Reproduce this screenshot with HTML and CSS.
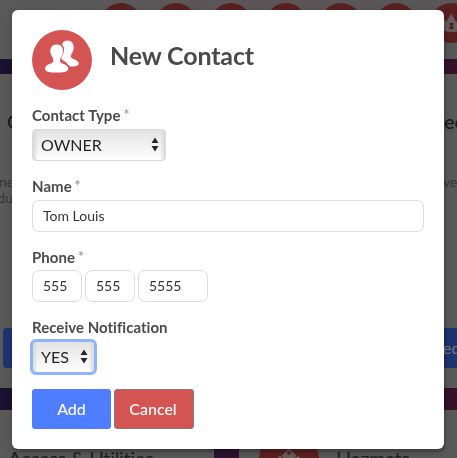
FILE: index.html
```html
<!DOCTYPE html>
<html lang="en">
<head>
<meta charset="utf-8">
<title>New Contact</title>
<link rel="stylesheet" href="styles.css">
</head>
<body>
<div class="page">
  <header class="topbar">
    <i class="dot"></i><i class="dot"></i><i class="dot"></i><i class="dot"></i><i class="dot"></i><i class="dot"></i>
    <i class="dot"><svg viewBox="0 0 40 40"><path fill="#65605f" d="M14 28C11 25 11 20 13.500 16l2 4c0-4 3-5 5-10 1 4 4 6 4.500 10l2-4c3 5 2.500 9-.5 12-3 1.500-9 1.500-12.500 0z"/><path fill="#521818" d="M18.500 20h4v2h-1v2h1v2h-4v-2h1v-2h-1z"/></svg></i>
  </header>
  <section class="panel wide">
    <div class="side left">
      <h3>C</h3>
      <p>one<br>du</p>
      <span class="action"></span>
    </div>
    <div class="side right">
      <h3>ec</h3>
      <p>ve</p>
      <span class="action">ed</span>
    </div>
  </section>
  <section class="lower">
    <div class="panel tile first"><h2>Access &amp; Utilities</h2></div>
    <div class="panel tile second">
      <svg class="haz" viewBox="0 0 60 60"><circle cx="30" cy="30" r="30" fill="#5d2020"/><g fill="#65605f" stroke="#5d2020"><path d="M30 18l8.500 8.500-8.500 8.500-8.500-8.500z"/><path d="M21 25l9 9-9 9-9-9zM39 25l9 9-9 9-9-9z"/></g><circle cx="30" cy="23" r="2" fill="#5d2020"/></svg>
      <h2>Hazmats</h2>
    </div>
  </section>
</div>

<div class="overlay">
  <form class="modal">
    <div class="head">
      <svg class="badge" viewBox="0 0 60 60"><circle cx="30" cy="30" r="30" fill="#d45454"/>
        <path fill="#fff" d="M30 14.500C31 11.500 33 10.500 35.500 10.500C39.500 10.500 41.700 13.400 41.700 17.500C41.700 20.500 40.400 22.500 39.400 24.300C38.400 26.500 38.800 28 40.800 28.800C44 30 46.700 31.200 46.700 33.500C46.700 35.700 43.300 36.500 39.700 36.500C36.800 36.500 36.500 34.300 33.800 32.200C31.700 30.500 29.400 30.200 29.300 28.300C29.300 26.800 32 24 32 19.500C32 17.500 31.300 15.700 30 14.500Z"/>
        <path fill="#fff" d="M24.700 14.500C28.700 14.500 31 17.200 31 21C31 24 29.500 26.300 28.500 28.200C27.500 30.500 27.800 32.300 30 33.300C33.200 34.700 36.200 35.800 36.200 39C36.200 42 30.500 42.500 24.600 42.500C18.700 42.500 13 42 13 39C13 35.800 16.100 34.700 19.300 33.300C21.500 32.300 21.900 30.500 20.900 28.200C19.900 26.300 18.300 24 18.300 21C18.300 17.200 20.700 14.500 24.700 14.500Z"/></svg>
      <h1>New Contact</h1>
    </div>
    <div class="field">
      <label>Contact Type <sup>*</sup></label>
      <div class="select type">OWNER<svg viewBox="0 0 8 15"><path d="M4 .5L7.500 6H.5zM4 14.500L.5 9h7z"/></svg></div>
    </div>
    <div class="field">
      <label>Name <sup>*</sup></label>
      <div class="input">Tom Louis</div>
    </div>
    <div class="field">
      <label>Phone <sup>*</sup></label>
      <div class="phone"><div class="input">555</div><div class="input">555</div><div class="input last">5555</div></div>
    </div>
    <div class="field">
      <label>Receive Notification</label>
      <div class="select notify">YES<svg viewBox="0 0 8 15"><path d="M4 .5L7.500 6H.5zM4 14.500L.5 9h7z"/></svg></div>
    </div>
    <div class="buttons"><button type="button" class="add">Add</button><button type="button" class="cancel">Cancel</button></div>
  </form>
</div>
</body>
</html>
```
FILE: styles.css
```css
* { box-sizing: border-box; }
html, body { margin: 0; height: 100%; overflow: hidden; }
body { font-family: Lato, "Liberation Sans", sans-serif; background: #1c1230; color: #4a4a4a; }
h1, h2, h3, p { margin: 0; }

.page { height: 458px; overflow: hidden; background: linear-gradient(90deg, #19122f, #2b1230 50%, #35122a); }
.topbar { height: 59px; padding: 3px 0 0 100.500px; display: flex; gap: 15px; background: linear-gradient(90deg, #595959 18%, #5c5558 60%, #595757); }
.dot { flex: none; width: 40px; height: 40px; border-radius: 50%; background: #5a2020; }
.dot svg { display: block; width: 40px; height: 40px; }
.panel { background: #595959; }
.wide { height: 314px; margin-top: 15px; display: flex; justify-content: space-between; }
.side { padding-top: 34px; }
.left { width: 40px; }
.right { width: 14px; }
.side h3 { font-size: 20px; line-height: 26px; font-weight: 500; color: #191919; white-space: nowrap; }
.left h3 { padding-left: 7px; }
.right h3 { padding-left: 1px; }
.side p { margin-top: 40px; height: 32px; font-size: 14px; line-height: 16px; color: #363636; }
.left p { margin-left: -9px; width: 22px; text-align: right; }
.action { display: block; height: 40px; margin-top: 122px; background: #1f3370; color: #777; font-size: 16px; line-height: 40px; }
.left .action { margin-left: 3px; border-radius: 3px 0 0 3px; }
.lower { display: flex; justify-content: space-between; height: 48px; margin-top: 22px; }
.tile { overflow: hidden; height: 48px; display: flex; }
.first { width: 214px; padding-left: 8px; }
.second { width: 218px; padding: 20px 0 0 20px; }
.tile h2 { font-size: 20px; line-height: 28px; font-weight: 400; letter-spacing: -.35px; color: #202020; white-space: nowrap; }
.first h2 { margin-top: 34px; }
.second h2 { margin: 14px 0 0 17px; }
.haz { flex: none; width: 60px; height: 60px; }

.overlay { position: fixed; inset: 0; padding: 10px 13px 0 12px; }
.modal { height: 438.500px; padding: 20px; background: #fff; border-radius: 6px; box-shadow: 1px 3px 3px rgba(0,0,0,.22), 1px 3px 10px 0 rgba(0,0,0,.18); }
.head { display: flex; height: 60px; margin-bottom: 15.400px; }
.badge { width: 60px; height: 60px; }
h1 { margin-left: 18px; font-size: 25px; line-height: 51px; font-weight: 700; letter-spacing: -.15px; white-space: nowrap; }
.field { margin-bottom: 15px; }
label { display: block; height: 23.600px; font-size: 15px; line-height: 21px; font-weight: 700; letter-spacing: .03px; white-space: nowrap; }
sup { font-size: 15px; line-height: 0; font-weight: 400; color: #888; vertical-align: 1px; margin-left: -1px; }
.input { height: 32px; padding: 0 10px; border: 1px solid #dcdcdc; border-radius: 7px; font-size: 14px; line-height: 30px; color: #333; }
.phone { display: flex; gap: 3px; }
.phone .input { width: 50px; }
.phone .last { width: 70px; }
.select { display: flex; justify-content: space-between; align-items: center; height: 32px; padding: 0 6px 0 8px; border: 1px solid #dadada; border-radius: 4px; background: linear-gradient(90deg, #d8d8d8, transparent 5px, transparent calc(100% - 5px), #d8d8d8), linear-gradient(#e3e3e3, #f1f1f1 50%, #fdfdfd); font-size: 16px; color: #252525; }
.select svg { width: 8px; height: 15px; fill: #252525; }
.type { width: 134px; }
.notify { width: 63px; outline: 3px solid #8eb5fa; outline-offset: -1px; }
.buttons { display: flex; gap: 3px; margin-top: 16px; }
button { height: 40px; padding: 0; border: 0; border-radius: 3px; color: #fff; font: 500 16px Lato, sans-serif; }
.add { width: 79px; background: #4e7eff; }
.cancel { width: 80px; padding-right: 2px; background: #d45454; border: 1px solid #8c7777; }
```
